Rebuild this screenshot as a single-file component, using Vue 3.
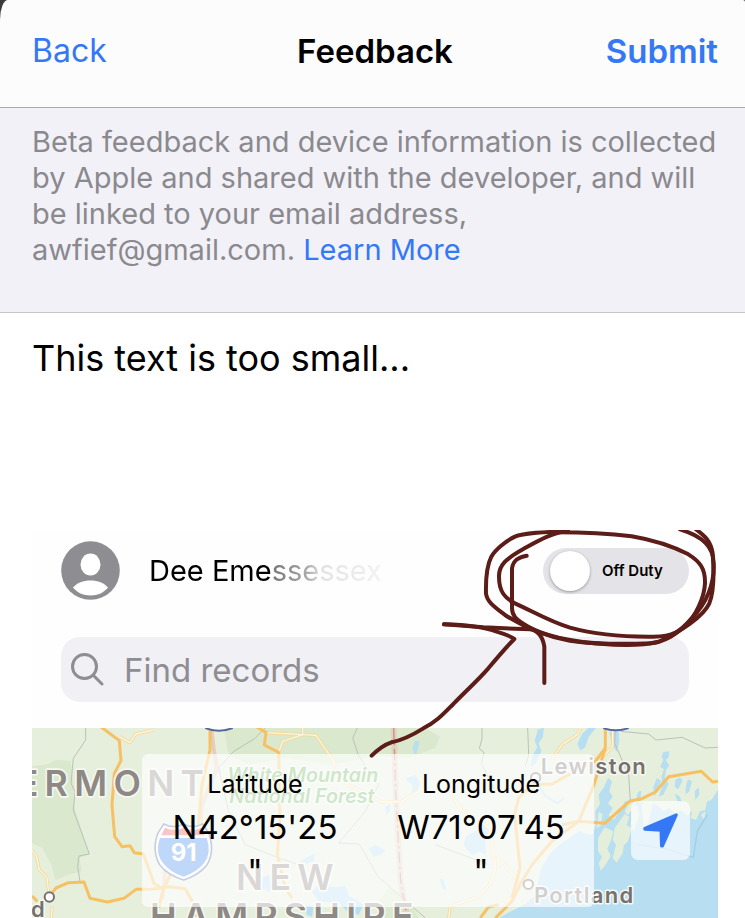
<script setup>
import { ref } from 'vue'

const feedback = ref('This text is too small...')
const query = ref('')
const onDuty = ref(false)
const coordinates = [
  { label: 'Latitude', value: 'N42°15\'25"' },
  { label: 'Longitude', value: 'W71°07\'45"' },
]
</script>

<template>
  <div class="page">
    <header class="bar">
      <button type="button" class="action back">Back</button>
      <h1 class="title">Feedback</h1>
      <button type="button" class="action submit">Submit</button>
    </header>

    <p class="notice">
      Beta feedback and device information is collected by Apple and shared with the developer, and will be linked to your email address, awfief@gmail.com. <a href="#learn-more">Learn More</a>
    </p>

    <textarea v-model="feedback" class="message" aria-label="Feedback message"></textarea>

    <section class="shot">
      <div class="profile">
        <svg class="avatar" viewBox="0 0 59 59" aria-hidden="true">
          <circle cx="29.500" cy="29.500" r="29.300" fill="#8e8d92" />
          <ellipse cx="29.500" cy="23.500" rx="10" ry="11" fill="#fff" />
          <path d="M12 46.500C16 42 22 39.500 29.500 39.500S43 42 47 46.500C43 51.500 37 54.500 29.500 54.500S16 51.500 12 46.500Z" fill="#fff" />
        </svg>
        <span class="name">Dee Emessessex</span>
        <label class="switch">
          <input v-model="onDuty" type="checkbox" role="switch" />
          <span class="knob"></span>
          <span>Off Duty</span>
        </label>
      </div>

      <label class="search">
        <svg class="lens" viewBox="0 0 34 34" aria-hidden="true">
          <circle cx="13.500" cy="13.500" r="12" />
          <path d="M22.500 22.500L31 31" />
        </svg>
        <input v-model="query" type="search" placeholder="Find records" aria-label="Find records" />
      </label>

      <div class="map">
        <svg class="terrain" viewBox="0 0 2058 570" preserveAspectRatio="xMinYMin slice" aria-hidden="true">
          <rect width="2058" height="570" fill="#e5efdc" />

          <!-- forests -->
          <g fill="#dae9cd">
            <path d="M0 115L50 108L70 96L115 98L125 165L128 240L172 378L142 390L150 430L110 440L70 456L58 410L30 360L0 345Z" />
            <path d="M575 0H1180L1224 26L1210 60L1130 90L1040 84L900 110L760 90L650 110L590 80Z" />
            <path d="M1040 520L1070 480L1120 500L1160 570H1060Z" />
          </g>

          <!-- sea -->
          <path fill="#b7def1" d="M1400 570L1440 548L1480 528L1512 500L1518 466L1528 420L1554 378L1580 352L1612 330L1640 310L1680 322L1692 290L1690 250L1704 228L1700 200L1716 178L1728 150L1740 160L1732 190L1742 206L1728 226L1742 240L1730 262L1745 276L1766 246L1780 218L1790 225L1778 252L1788 262L1808 232L1818 192L1828 188L1824 220L1838 226L1850 240L1864 226L1880 236L1896 248L1912 240L1930 256L1948 246L1964 262L1980 250L1976 270L1992 276L2004 250L2020 246L2024 222L2040 214L2058 185V570Z" />
          <g fill="#e3eedb">
            <path d="M1698 330L1718 298L1744 310L1736 340L1726 362L1736 384L1720 412L1706 428L1700 405L1710 386L1698 370Z" />
            <path d="M1748 300L1778 258L1792 266L1784 292L1800 300L1788 340L1776 352L1772 376L1754 404L1742 390L1752 350L1742 336Z" />
            <path d="M1800 240L1816 230L1822 262L1806 310L1796 290Z" />
            <path d="M1828 226L1862 230L1850 280L1836 310Z" />
            <path d="M1700 250L1712 260L1706 292L1694 302Z" />
            <path d="M2006 262L2020 250L2018 276Z" />
            <path d="M1392 524L1440 508L1452 530L1420 550L1392 562Z" />
          </g>
          <g fill="#b7def1">
            <path d="M1894 72L1912 70L1910 88L1902 96L1912 112L1902 126L1898 150L1910 168L1894 200L1880 206L1892 170L1888 146L1896 124L1884 116L1894 96L1888 86Z" />
            <path d="M1874 150L1888 158L1876 184L1868 206L1864 178Z" />
            <path d="M1930 156L1944 148L1952 158L1938 184L1928 176Z" />
            <path d="M1968 154L1980 160L1972 190L1960 200L1962 174Z" />
            <path d="M1928 196L1944 206L1950 224L1936 220Z" />
            <path d="M1988 190L2000 178L2002 200L1990 216Z" />
          </g>

          <!-- lakes and rivers -->
          <g fill="#b7def1">
            <path d="M1148 38L1162 40L1158 62L1150 84L1142 64Z" />
            <path d="M1518 4L1536 0L1532 28L1520 46L1528 70L1510 108L1496 116L1502 82L1516 58L1508 38Z" />
            <path d="M1650 18L1668 0H1692L1670 26L1660 58L1646 68L1636 48Z" />
            <path d="M1732 14L1748 0L1760 6L1762 40L1754 72L1742 52Z" />
            <path d="M1302 325L1336 306L1352 276L1372 300L1360 340L1362 380L1340 370L1320 382L1294 350Z" />
            <path d="M1010 362L1030 352L1060 366L1050 378L1024 386Z" />
            <path d="M800 402L848 376L846 400L810 412Z" />
            <path d="M840 490L870 460L900 478L940 474L950 502L994 530L980 560L946 550L920 524L860 520Z" />
            <path d="M1058 236L1074 228L1074 250L1064 262Z" />
            <path d="M1120 152L1150 140L1164 162L1156 190L1138 196L1142 172Z" />
            <path d="M1222 450L1236 456L1244 488L1230 480Z" />
            <path d="M820 530L844 536L840 566L824 560Z" />
            <path d="M680 452L712 440L716 492L690 482Z" />
          </g>

          <!-- county and state lines -->
          <g class="line county">
            <path d="M161 0V36L124 91L117 166L129 191L124 246L172 378L141 384L137 416L144 461" />
            <path d="M699 0L669 31L604 71L560 120L590 250L640 350L735 388L800 410" />
            <path d="M976 0L962 30L980 84L1040 170L1000 250L920 345L982 348L1038 446L1180 570" />
            <path d="M1350 0V32L1342 62L1356 74L1348 106L1390 190" />
            <path d="M1487 0L1490 80L1480 116" />
            <path d="M1750 0L1748 46L1790 140L1795 220" />
            <path d="M1766 10L1850 18L1872 36L1950 28L2020 60L2058 58" />
            <path d="M1210 350L1290 380L1370 410" />
          </g>
          <path d="M1085 0L1092 210L1106 460L1126 570" fill="none" stroke="#e9bfb4" stroke-width="18" opacity="0.550" />
          <path d="M1085 0L1092 210L1106 460L1126 570" fill="none" stroke="#c99287" stroke-width="4" stroke-dasharray="34 10 8 10" />
          <path d="M537 0L546 70L555 120L530 180L508 240L506 300L400 430L390 515" fill="none" stroke="#e3a398" stroke-width="12" opacity="0.450" />
          <path d="M1815 350L1900 362L1984 388L1996 310L2026 260" fill="none" stroke="#a0cfe6" stroke-width="4" />
          <path d="M1506 150L1540 204L1576 226L1598 210" fill="none" stroke="#b7def1" stroke-width="6" />

          <!-- minor roads -->
          <g class="line casing">
            <path d="M0 368L14 386L22 426L44 446L52 506" />
            <path d="M58 570L60 536" />
            <path d="M262 26L294 44L312 18L364 6" />
            <path d="M700 14L812 20L852 22L904 98L912 150L1050 222L1110 220L1160 190" />
            <path d="M812 0V20L752 40L740 73" />
            <path d="M1560 94L1590 50L1636 20L1646 0" />
            <path d="M1742 0V56L1716 82L1676 100" />
            <path d="M1250 180L1282 240L1372 300L1392 420L1372 470L1340 506L1254 536L1250 570" />
            <path d="M1392 380L1470 470L1420 530" />
          </g>
          <g class="line lane">
            <path d="M0 368L14 386L22 426L44 446L52 506" />
            <path d="M58 570L60 536" />
            <path d="M262 26L294 44L312 18L364 6" />
            <path d="M700 14L812 20L852 22L904 98L912 150L1050 222L1110 220L1160 190" />
            <path d="M812 0V20L752 40L740 73" />
            <path d="M1560 94L1590 50L1636 20L1646 0" />
            <path d="M1742 0V56L1716 82L1676 100" />
            <path d="M1250 180L1282 240L1372 300L1392 420L1372 470L1340 506L1254 536L1250 570" />
            <path d="M1392 380L1470 470L1420 530" />
          </g>

          <!-- highways -->
          <g class="line highway">
            <path d="M206 -4L262 38L267 98L247 136L240 231L248 326L270 356L294 353L307 374L334 378L366 466L394 484" />
            <path d="M0 504L16 520M56 500L72 480L109 464L156 462L174 511L226 522L276 511L312 484L366 483L410 476L460 482L486 530L496 570" />
            <path d="M534 0V66L510 170L498 300L420 430L394 484L380 540" />
            <path d="M672 -4L702 13L697 51L740 73L744 270L736 380L760 480L780 510" />
            <path d="M1720 0V60L1686 170L1640 280L1560 340L1500 410L1464 470L1440 520L1390 570" />
            <path d="M1720 60L1690 100L1640 124L1560 168L1500 170L1460 210L1448 260L1464 420L1440 510" />
            <path d="M1590 290L1640 280L1718 286L1794 219L1830 212L1870 192L1910 146L2008 130L2042 162L2058 160" />
            <path d="M1345 570L1370 536L1400 530" />
          </g>

          <!-- interstate shields -->
          <g>
            <path d="M395 288Q425 304 455 288Q482 304 512 288L530 315Q550 370 524 412Q500 442 455 456Q408 442 384 412Q358 368 378 315Z" fill="#fff" stroke="#5f69a6" stroke-width="5" />
            <path d="M399 299Q428 312 455 299Q482 312 508 299L518 322H388Z" fill="#e8505c" />
            <path d="M384 330H524Q540 374 516 406Q494 433 455 446Q415 434 393 405Q368 374 384 330Z" fill="#3f86ec" />
            <text class="shield-text" x="455" y="400">91</text>
            <path d="M520 0Q560 16 602 0" fill="#fff" stroke="#53679f" stroke-width="6" />
            <path d="M1714 0Q1750 14 1790 0" fill="#fff" stroke="#53679f" stroke-width="6" />
          </g>

          <!-- place labels -->
          <g class="state">
            <text x="-46" y="204">ERMONT</text>
            <text x="612" y="486">NEW</text>
            <text x="354" y="602">HAMPSHIRE</text>
          </g>
          <g class="park">
            <text x="586" y="163">White Mountain</text>
            <text x="592" y="226">National Forest</text>
          </g>
          <g class="city">
            <text x="1526" y="138">Lewiston</text>
            <text x="1506" y="526">Portland</text>
            <text x="-3" y="566">d</text>
          </g>
          <g fill="#fff" stroke="#77716e" stroke-width="6">
            <circle cx="52" cy="507" r="14" />
            <circle cx="1511" cy="149" r="14" />
            <circle cx="1489" cy="469" r="14" />
          </g>
        </svg>

        <dl class="position">
          <div v-for="item in coordinates" :key="item.label" class="axis">
            <dt>{{ item.label }}</dt>
            <dd>{{ item.value }}</dd>
          </div>
        </dl>
        <button type="button" class="locate" aria-label="Current location">
          <svg viewBox="0 0 59 59" aria-hidden="true">
            <path d="M45.300 13.800L13.800 27.300V28.300L30 29.300L30.500 45H31.500Z" />
          </svg>
        </button>
      </div>

      <svg class="markup" viewBox="0 0 2058 1164" preserveAspectRatio="xMinYMin meet" aria-hidden="true">
        <g transform="translate(1164 -30)">
          <path d="M320 107C295 112 280 120 276 145V265C276 285 285 298 325 320C370 345 440 363 540 371C610 377 670 376 715 366C780 335 850 290 868 250C884 210 882 150 878 100C872 60 850 45 828 28" />
          <path d="M444 32C400 36 350 65 310 87C260 115 236 135 237 170C237 215 255 235 285 250C340 275 390 305 450 323C530 345 610 351 700 350C760 350 780 335 815 295C860 250 884 190 881 130C880 80 850 50 780 28" />
          <path d="M444 34C380 36 310 38 285 50C255 64 225 90 214 110C199 140 197 180 198 220C200 245 225 262 255 285C310 320 380 350 450 362C530 373 610 373 690 370C740 364 770 340 795 318C830 285 853 230 855 190C856 145 840 125 805 103C760 80 700 60 635 49C560 40 490 37 410 37" />
          <path d="M72 313C140 315 190 320 230 335C260 344 276 350 283 357C255 385 230 415 205 445C170 485 130 520 100 552C70 582 50 605 10 625C-30 650 -60 662 -86 667C-110 675 -125 687 -145 707" />
          <path d="M72 313L190 322L330 328C355 332 368 350 373 380V489" />
        </g>
      </svg>
    </section>
  </div>
</template>

<style>
body {
  margin: 0;
  background: #fff;
}
</style>

<style scoped>
.page {
  display: flex;
  flex-direction: column;
  min-height: 100vh;
  box-sizing: border-box;
  overflow: hidden;
  background: #fff;
  color: #000;
  font-family: Inter, "Liberation Sans", sans-serif;
}

button,
input,
textarea {
  font: inherit;
}

.bar {
  display: grid;
  grid-template-columns: 1fr auto 1fr;
  align-items: center;
  height: 107px;
  padding: 0 27px 6px 32px;
  box-sizing: border-box;
  background: #fcfcfd;
  border-radius: 8px 2px 0 0 / 20px 2px 0 0;
  box-shadow: 0 -20px 0 20px #3a393c;
  clip-path: inset(0);
}

.title {
  margin: 0;
  font-size: 33px;
  font-weight: 600;
  line-height: 40px;
}

.action {
  padding: 0;
  border: 0;
  background: none;
  color: #3478f6;
  line-height: 40px;
  cursor: pointer;
}

.back {
  justify-self: start;
  font-size: 32px;
}

.submit {
  justify-self: end;
  font-size: 33px;
  font-weight: 600;
}

.notice {
  margin: 0;
  padding: 16px 24px 44px 32px;
  border-top: 1px solid #a9a8ae;
  border-bottom: 1px solid #c5c4c9;
  background: #f2f1f7;
  color: #8a898e;
  font-size: 29px;
  line-height: 36px;
}

.notice a {
  color: #3478f6;
  text-decoration: none;
}

.message {
  display: block;
  width: 100%;
  height: 217px;
  padding: 21px 32px;
  box-sizing: border-box;
  border: 0;
  outline: 0;
  resize: none;
  background: #fff;
  color: #000;
  font-size: 36px;
  line-height: 48px;
}

.shot {
  position: relative;
  display: flex;
  flex: 1;
  flex-direction: column;
  margin: 0 27px 0 32px;
  overflow: hidden;
  background: #fefefe;
}

.profile {
  display: flex;
  align-items: center;
  padding: 11px 29px 0;
}

.avatar {
  width: 59px;
  height: 59px;
}

.name {
  margin-left: 29px;
  background: linear-gradient(90deg, #000 52%, #777 53%, #aaa 68%, #e2e2e2 74%, #f2f2f2);
  background-clip: text;
  color: transparent;
  font-size: 29px;
  line-height: 40px;
}

.switch {
  display: flex;
  align-items: center;
  width: 146px;
  height: 46px;
  margin-left: auto;
  padding-left: 7px;
  box-sizing: border-box;
  border-radius: 23px;
  background: #e4e3e8;
  font-size: 15px;
  font-weight: 600;
  cursor: pointer;
}

.switch input {
  position: absolute;
  opacity: 0;
}

.knob {
  width: 40px;
  height: 40px;
  margin-right: 12px;
  border-radius: 50%;
  background: #fff;
  box-shadow: 0 1px 3px #00000059;
}

.search {
  display: flex;
  align-items: center;
  height: 65px;
  margin: 37px 29px 26px;
  padding: 0 10px;
  box-sizing: border-box;
  border-radius: 19px;
  background: #f1f0f5;
}

.lens {
  flex: none;
  width: 34px;
  height: 34px;
  margin-right: 19px;
  fill: none;
  stroke: #8e8d92;
  stroke-width: 3;
  stroke-linecap: round;
}

.search input {
  flex: 1;
  min-width: 0;
  padding: 0;
  border: 0;
  outline: 0;
  background: none;
  font-size: 33px;
  line-height: 40px;
}

.search input::placeholder {
  color: #8e8d92;
  opacity: 1;
}

.map {
  position: relative;
  display: flex;
  flex: 1;
  align-items: center;
  justify-content: space-between;
  gap: 37px;
  padding: 26px 28px 11px 110px;
}

.terrain {
  position: absolute;
  inset: 0;
  width: 100%;
  height: 100%;
}

.line {
  fill: none;
  stroke-linejoin: round;
}

.county {
  stroke: #bcc1b7;
  stroke-width: 3;
}

.casing {
  stroke: #f3d79c;
  stroke-width: 9;
}

.lane {
  stroke: #fff7dc;
  stroke-width: 4;
}

.highway {
  stroke: #f6c063;
  stroke-width: 9;
}

.terrain text {
  paint-order: stroke;
  stroke: #f6f8f2;
  stroke-linejoin: round;
}

.state text {
  fill: #8e8985;
  stroke-width: 10px;
  font-size: 107px;
  font-weight: 600;
  letter-spacing: 19px;
}

.park text {
  fill: #6db35f;
  stroke-width: 8px;
  font-size: 59px;
  font-style: italic;
  font-weight: 600;
}

.city text {
  fill: #77716e;
  stroke-width: 9px;
  font-size: 66px;
  font-weight: 600;
  letter-spacing: 4px;
}

.terrain .shield-text {
  fill: #fff;
  stroke: none;
  font-size: 72px;
  font-weight: 700;
  text-anchor: middle;
}

.position {
  position: relative;
  display: grid;
  flex: 1;
  grid-template-columns: 1fr 1fr;
  height: 153px;
  margin: 0;
  border-radius: 6px;
  background: #ffffffab;
  text-align: center;
}

.axis {
  padding: 13px 26px 0;
}

.axis dt {
  font-size: 25px;
  line-height: 34px;
}

.axis dd {
  margin: 4px 0 0;
  font-size: 33px;
  line-height: 44px;
  line-break: anywhere;
}

.locate {
  position: relative;
  flex: none;
  width: 59px;
  height: 59px;
  padding: 0;
  border: 0;
  border-radius: 7px;
  background: #ffffffab;
  cursor: pointer;
}

.locate svg {
  display: block;
  fill: #3478f6;
  stroke: #3478f6;
  stroke-width: 3;
  stroke-linejoin: round;
}

.markup {
  position: absolute;
  top: 0;
  left: 0;
  width: 100%;
  pointer-events: none;
}

.markup path {
  fill: none;
  stroke: #5c1c17;
  stroke-width: 12;
  stroke-linecap: round;
  stroke-linejoin: round;
}
</style>
